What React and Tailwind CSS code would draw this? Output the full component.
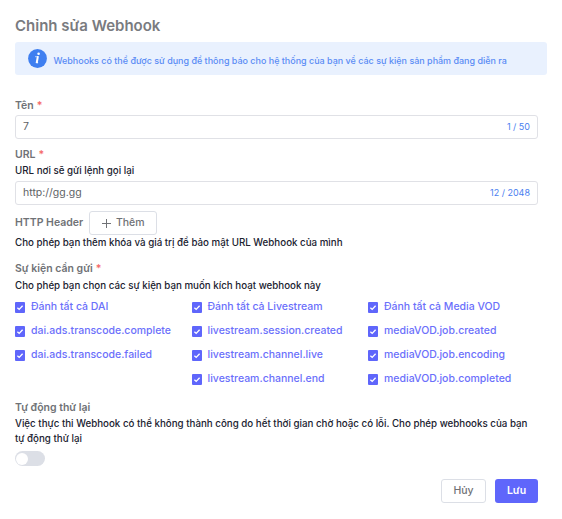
const events = [
  ["Đánh tất cả DAI", "dai.ads.transcode.complete", "dai.ads.transcode.failed"],
  ["Đánh tất cả Livestream", "livestream.session.created", "livestream.channel.live", "livestream.channel.end"],
  ["Đánh tất cả Media VOD", "mediaVOD.job.created", "mediaVOD.job.encoding", "mediaVOD.job.completed"],
];

function Check({ label }) {
  return (
    <label className="flex h-6 items-center gap-[6px] text-[10.5px] font-medium text-[#6b70fb] whitespace-nowrap">
      <svg className="mt-[2px] h-[11px] w-[10px] shrink-0" viewBox="0 0 10 11">
        <rect width="10" height="11" rx="1" fill="#5f66fb" />
        <path d="M2.4 5.7 4.2 7.4 7.6 3.7" fill="none" stroke="#fff" strokeWidth="1.3" />
      </svg>
      <span className="pt-[2px]">{label}</span>
    </label>
  );
}

function Label({ children, required }) {
  return (
    <div className="text-[10.5px] leading-4 font-semibold text-[#707276]">
      {children}
      {required && <span className="ml-[3px] font-semibold text-[#f56c6c]">*</span>}
    </div>
  );
}

function Field({ value, count }) {
  return (
    <div className="flex h-6 w-[523px] items-center justify-between rounded-[3px] border border-[#e0e1e6] px-[7px] text-[10.5px] text-[#606266]">
      <span>{value}</span>
      <span className="text-[9px] text-[#4a80f0]">{count}</span>
    </div>
  );
}

export default function App() {
  return (
    <main className="h-[519px] w-[562px] overflow-hidden bg-white pt-4 pl-[15px] font-['Inter',sans-serif]">
      <h1 className="text-[15px] leading-5 font-semibold text-[#797b7f]">Chỉnh sửa Webhook</h1>
      <div className="mt-[6px] flex h-[33px] w-[532px] items-center rounded-[3px] bg-[#e9f1fe] pl-[13px]">
        <svg className="h-[19px] w-[19px]" viewBox="0 0 19 19">
          <circle cx="9.5" cy="9.5" r="9.4" fill="#3f7ff0" />
          <circle cx="10.6" cy="4.7" r="1.3" fill="#fff" />
          <path d="M7.4 7.7h1.2M7.9 13.7h2.2" fill="none" stroke="#fff" strokeWidth="1" />
          <path d="M9.9 7.2 8.7 14" fill="none" stroke="#fff" strokeWidth="2" />
        </svg>
        <span className="mt-[5px] ml-[6.5px] text-[8.98px] font-medium text-[#5a8cf5] whitespace-nowrap">Webhooks có thể được sử dụng để thông báo cho hệ thống của bạn về các sự kiện sản phẩm đang diễn ra</span>
      </div>
      <div className="mt-[23px]"><Label required>Tên</Label></div>
      <div className="mt-px"><Field value="7" count="1 / 50" /></div>
      <div className="mt-2"><Label required>URL</Label></div>
      <p className="text-[9.75px] leading-4 font-medium text-[#20222f]">URL nơi sẽ gửi lệnh gọi lại</p>
      <div className="mt-[2px]"><Field value="http://gg.gg" count="12 / 2048" /></div>
      <div className="mt-[6px] flex h-6 items-center gap-[6px]">
        <Label>HTTP Header</Label>
        <button className="flex h-6 w-[68px] items-center justify-center gap-[5px] rounded-[3px] border border-[#dcdfe6] text-[10.5px] font-medium text-[#707276]">
          <svg className="h-[9px] w-[9px]" viewBox="0 0 9 9"><path d="M0 4.5h9M4.5 0v9" stroke="#707276" /></svg>
          Thêm
        </button>
      </div>
      <p className="text-[9.75px] leading-4 font-medium text-[#20222f]">Cho phép bạn thêm khóa và giá trị để bảo mật URL Webhook của mình</p>
      <div className="mt-[10px]"><Label required>Sự kiện cần gửi</Label></div>
      <p className="mt-px text-[9.75px] leading-4 font-medium text-[#20222f]">Cho phép bạn chọn các sự kiện bạn muốn kích hoạt webhook này</p>
      <div className="grid grid-cols-[176.5px_176.5px_170px]">
        {events.map((column) => (
          <div key={column[0]}>{column.map((label) => <Check key={label} label={label} />)}</div>
        ))}
      </div>
      <div className="mt-[10px]"><Label>Tự động thử lại</Label></div>
      <p className="w-[523px] text-[9.75px] leading-[15px] font-medium text-[#20222f]">Việc thực thi Webhook có thể không thành công do hết thời gian chờ hoặc có lỗi. Cho phép webhooks của bạn<br />tự động thử lại</p>
      <div className="mt-[5px] flex h-[15px] w-[30px] items-center rounded-full bg-[#dcdfe6] pl-px"><span className="h-[12px] w-[12px] rounded-full bg-white" /></div>
      <div className="mt-[13px] flex w-[523px] justify-end gap-[9px] text-[10.5px] font-medium">
        <button className="h-6 w-[45px] rounded-[3px] border border-[#dcdfe6] text-[#707276]">Hủy</button>
        <button className="h-6 w-[43px] rounded-[3px] bg-[#5f66fb] font-semibold text-white">Lưu</button>
      </div>
    </main>
  );
}
